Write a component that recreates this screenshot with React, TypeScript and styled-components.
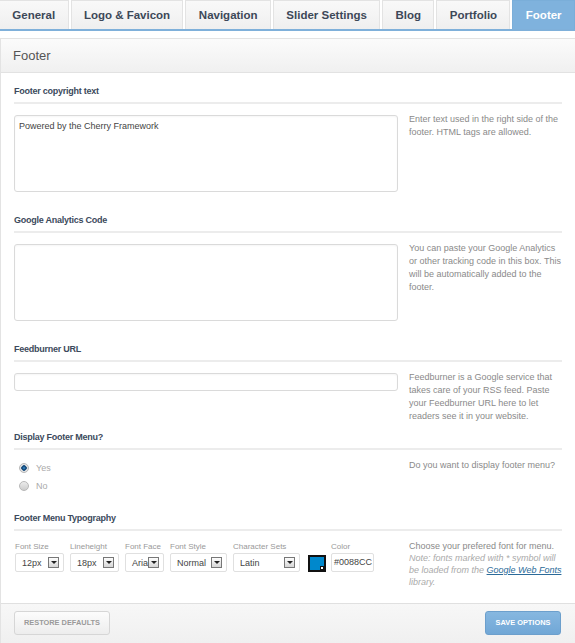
import React from 'react';
import styled, { createGlobalStyle } from 'styled-components';

const GlobalStyle = createGlobalStyle`
  body {
    margin: 0;
    background: #fff;
    font-family: 'Liberation Sans', Arial, sans-serif;
  }
  #root {
    width: 575px;
    overflow: hidden;
  }
`;

const TabBar = styled.div`
  display: flex;
  gap: 2px;
  margin-left: -1px;
  border-bottom: 2px solid #7fb0da;
`;

const Tab = styled.div<{ $active?: boolean }>`
  flex: 1 1 auto;
  height: 29px;
  box-sizing: border-box;
  padding: 0 12px;
  border: 1px solid ${({ $active }) => ($active ? '#7aaed9' : '#e3e3e3')};
  border-bottom: none;
  background: ${({ $active }) =>
    $active ? '#7fb2dd' : 'linear-gradient(#f9f9f9, #efefef)'};
  color: ${({ $active }) => ($active ? '#fff' : '#3d4858')};
  font-size: 11.5px;
  font-weight: bold;
  line-height: 28px;
  text-align: center;
  white-space: nowrap;
`;

const Panel = styled.div`
  margin-top: 7px;
  border-top: 1px solid #e3e3e3;
  border-left: 1px solid #e3e3e3;
`;

const PanelHeader = styled.div`
  height: 34px;
  box-sizing: border-box;
  padding-left: 12px;
  border-bottom: 1px solid #e2e2e2;
  background: linear-gradient(#fbfbfb, #f0f0f0);
  color: #555;
  font-size: 13px;
  line-height: 33px;
`;

const Body = styled.div`
  padding: 12px 13px 0 13px;
`;

const Section = styled.div<{ $space: number }>`
  padding-bottom: ${({ $space }) => $space}px;
`;

const Title = styled.div`
  padding-bottom: 5px;
  border-bottom: 2px solid #ececec;
  color: #3c4a5c;
  font-size: 9px;
  font-weight: bold;
  letter-spacing: -0.25px;
  line-height: 12px;
`;

const Row = styled.div`
  display: flex;
  align-items: flex-start;
  gap: 11px;
  margin-top: 11px;
`;

const Control = styled.div`
  flex: none;
  width: 384px;
`;

const Description = styled.div<{ $lh?: number }>`
  flex: 1;
  margin-top: -2px;
  color: #8a8a8a;
  font-size: 9px;
  line-height: ${({ $lh }) => $lh ?? 13}px;
  white-space: nowrap;
`;

const Note = styled.span`
  color: #aaa;
  font-style: italic;
`;

const Link = styled.a`
  color: #2b6a98;
  text-decoration: underline;
`;

const TextArea = styled.div<{ $height: number }>`
  height: ${({ $height }) => $height}px;
  box-sizing: border-box;
  padding: 4px 4px;
  border: 1px solid #dadada;
  border-radius: 3px;
  box-shadow: inset 0 1px 2px rgba(0, 0, 0, 0.04);
  background: #fff;
  color: #444;
  font-size: 9px;
  line-height: 12px;
`;

const RadioGroup = styled.div`
  margin-top: -2px;
  padding-left: 5px;
`;

const RadioRow = styled.div`
  display: flex;
  align-items: center;
  gap: 7px;
  height: 18px;
  color: #aaa;
  font-size: 9px;
`;

const RadioDot = styled.span<{ $checked?: boolean }>`
  width: 10px;
  height: 10px;
  box-sizing: border-box;
  border-radius: 50%;
  border: 1px solid #b8b8b8;
  background: ${({ $checked }) =>
    $checked
      ? 'radial-gradient(circle, #2a78b4 0 1px, #1b4f80 1.5px 2.5px, #e4e4e4 3px)'
      : 'linear-gradient(#ececec, #cdcdcd)'};
`;

const FieldRow = styled.div`
  display: flex;
  align-items: flex-end;
  gap: 6px;
  margin-left: 1px;
`;

const Field = styled.div`
  display: flex;
  flex-direction: column;
  gap: 2px;
`;

const FieldLabel = styled.div`
  color: #999;
  font-size: 8px;
  line-height: 9px;
  white-space: nowrap;
`;

const SelectBox = styled.div<{ $width: number }>`
  display: flex;
  align-items: center;
  width: ${({ $width }) => $width}px;
  height: 19px;
  box-sizing: border-box;
  border: 1px solid #e0e0e0;
  border-radius: 2px;
  background: #fff;
`;

const SelectText = styled.span`
  flex: 1;
  min-width: 0;
  overflow: hidden;
  padding-left: 6px;
  color: #444;
  font-size: 9px;
  white-space: nowrap;
`;

const Arrow = styled.span`
  display: flex;
  align-items: center;
  justify-content: center;
  flex: none;
  width: 11px;
  height: 11px;
  box-sizing: border-box;
  margin-right: 4px;
  border: 1px solid #777;
  background: linear-gradient(#fdfdfd, #d6d6d6);

  &::after {
    content: '';
    border-left: 3px solid transparent;
    border-right: 3px solid transparent;
    border-top: 3px solid #222;
  }
`;

const Swatch = styled.div`
  position: relative;
  width: 18px;
  height: 17px;
  box-sizing: border-box;
  margin: 0 -1px 0 2px;
  border: 2px solid #111;
  background: #0088cc;

  &::after {
    content: '';
    position: absolute;
    right: 0;
    bottom: 0;
    width: 2px;
    height: 2px;
    background: #fff;
    border: 1px solid #111;
  }
`;

const ColorInput = styled.div`
  width: 43px;
  height: 19px;
  box-sizing: border-box;
  overflow: hidden;
  padding-left: 2px;
  border: 1px solid #e0e0e0;
  border-radius: 2px;
  color: #444;
  font-size: 9px;
  line-height: 17px;
  white-space: nowrap;
`;

const FooterBar = styled.div`
  display: flex;
  justify-content: space-between;
  padding: 7px 14px 8px 13px;
  border-top: 1px solid #e0e0e0;
  background: linear-gradient(#f7f7f7, #f0f0f0);
`;

const Button = styled.div<{ $primary?: boolean; $width: number }>`
  width: ${({ $width }) => $width}px;
  height: 24px;
  box-sizing: border-box;
  border: 1px solid ${({ $primary }) => ($primary ? '#6c9fcc' : '#d6d6d6')};
  border-radius: 3px;
  background: ${({ $primary }) =>
    $primary
      ? 'linear-gradient(#86b7e0, #71a7d6)'
      : 'linear-gradient(#fcfcfc, #ededed)'};
  color: ${({ $primary }) => ($primary ? '#fff' : '#9a9a9a')};
  font-size: 7.4px;
  font-weight: bold;
  line-height: 22px;
  text-align: center;
  white-space: nowrap;
`;

const tabs = [
  'General',
  'Logo & Favicon',
  'Navigation',
  'Slider Settings',
  'Blog',
  'Portfolio',
  'Footer',
];

const selects = [
  { label: 'Font Size', value: '12px', width: 49 },
  { label: 'Lineheight', value: '18px', width: 49 },
  { label: 'Font Face', value: 'Arial', width: 39 },
  { label: 'Font Style', value: 'Normal', width: 57 },
  { label: 'Character Sets', value: 'Latin', width: 67 },
];

const Lines = ({ lines }: { lines: string[] }) => (
  <>
    {lines.map((line) => (
      <div key={line}>{line}</div>
    ))}
  </>
);

export default function App() {
  return (
    <>
      <GlobalStyle />
      <TabBar>
        {tabs.map((t) => (
          <Tab key={t} $active={t === 'Footer'}>
            {t}
          </Tab>
        ))}
      </TabBar>
      <Panel>
        <PanelHeader>Footer</PanelHeader>
        <Body>
          <Section $space={22}>
            <Title>Footer copyright text</Title>
            <Row>
              <Control>
                <TextArea $height={77}>Powered by the Cherry Framework</TextArea>
              </Control>
              <Description>
                <Lines
                  lines={[
                    'Enter text used in the right side of the',
                    'footer. HTML tags are allowed.',
                  ]}
                />
              </Description>
            </Row>
          </Section>

          <Section $space={22}>
            <Title>Google Analytics Code</Title>
            <Row>
              <Control>
                <TextArea $height={77} />
              </Control>
              <Description>
                <Lines
                  lines={[
                    'You can paste your Google Analytics',
                    'or other tracking code in this box. This',
                    'will be automatically added to the',
                    'footer.',
                  ]}
                />
              </Description>
            </Row>
          </Section>

          <Section $space={8}>
            <Title>Feedburner URL</Title>
            <Row>
              <Control>
                <TextArea $height={18} />
              </Control>
              <Description>
                <Lines
                  lines={[
                    'Feedburner is a Google service that',
                    'takes care of your RSS feed. Paste',
                    'your Feedburner URL here to let',
                    'readers see it in your website.',
                  ]}
                />
              </Description>
            </Row>
          </Section>

          <Section $space={17}>
            <Title>Display Footer Menu?</Title>
            <Row>
              <Control>
                <RadioGroup>
                  <RadioRow>
                    <RadioDot $checked />
                    Yes
                  </RadioRow>
                  <RadioRow>
                    <RadioDot />
                    No
                  </RadioRow>
                </RadioGroup>
              </Control>
              <Description>Do you want to display footer menu?</Description>
            </Row>
          </Section>

          <Section $space={15}>
            <Title>Footer Menu Typography</Title>
            <Row>
              <Control>
                <FieldRow>
                  {selects.map((s) => (
                    <Field key={s.label}>
                      <FieldLabel>{s.label}</FieldLabel>
                      <SelectBox $width={s.width}>
                        <SelectText>{s.value}</SelectText>
                        <Arrow />
                      </SelectBox>
                    </Field>
                  ))}
                  <Swatch />
                  <Field>
                    <FieldLabel>Color</FieldLabel>
                    <ColorInput>#0088CC</ColorInput>
                  </Field>
                </FieldRow>
              </Control>
              <Description $lh={12}>
                <div>Choose your prefered font for menu.</div>
                <Note>
                  <div>Note: fonts marked with * symbol will</div>
                  <div>
                    be loaded from the <Link>Google Web Fonts</Link>
                  </div>
                  <div>library.</div>
                </Note>
              </Description>
            </Row>
          </Section>
        </Body>
        <FooterBar>
          <Button $width={96}>RESTORE DEFAULTS</Button>
          <Button $width={76} $primary>
            SAVE OPTIONS
          </Button>
        </FooterBar>
      </Panel>
    </>
  );
}
